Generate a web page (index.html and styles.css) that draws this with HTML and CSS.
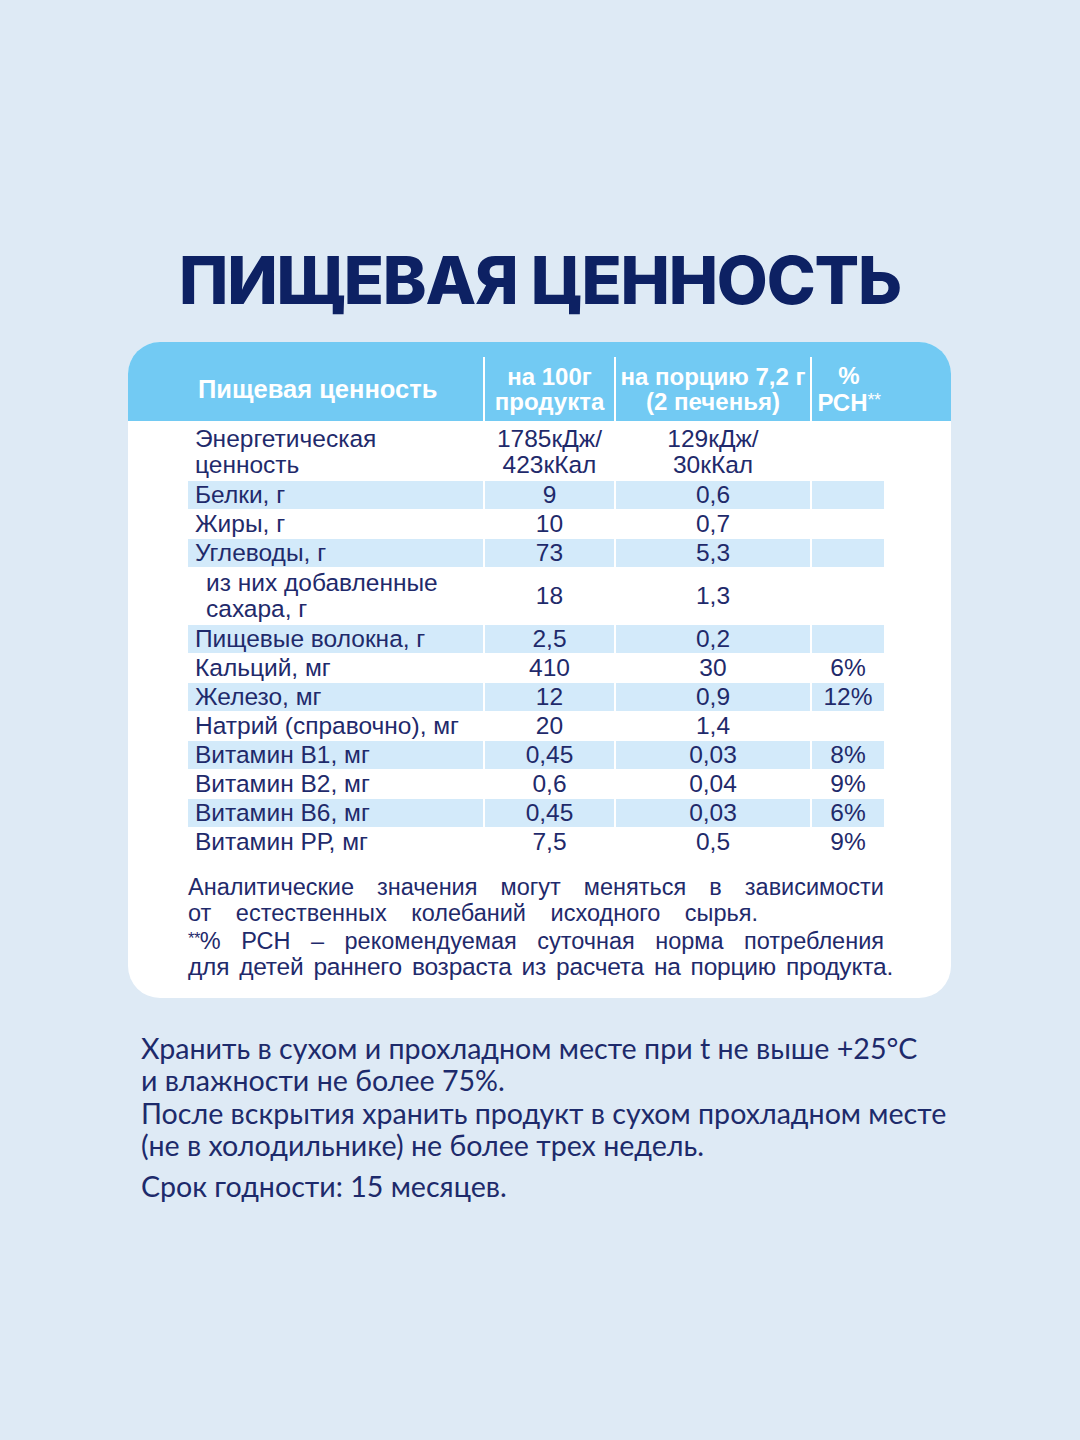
FILE: index.html
```html
<!DOCTYPE html>
<html lang="ru">
<head>
<meta charset="utf-8">
<title>Пищевая ценность</title>
<link rel="stylesheet" href="styles.css">
</head>
<body>
<main class="page">
  <h1 class="title">ПИЩЕВАЯ ЦЕННОСТЬ</h1>

  <section class="card">
    <div class="card-head">
      <div class="head-grid">
        <div class="hcell hname"><span>Пищевая ценность</span></div>
        <div class="hcell hnum"><span>на 100г<br>продукта</span></div>
        <div class="hcell hnum"><span>на порцию 7,2 г<br>(2 печенья)</span></div>
        <div class="hcell hnum hpct"><span>%<br>РСН<span class="stars">**</span></span></div>
      </div>
    </div>

    <div class="rows">
      <div class="row tall"><div class="c name"><span>Энергетическая<br>ценность</span></div><div class="c num"><span>1785кДж/<br>423кКал</span></div><div class="c num"><span>129кДж/<br>30кКал</span></div><div class="c num"></div></div>
      <div class="row alt"><div class="c name">Белки, г</div><div class="c num">9</div><div class="c num">0,6</div><div class="c num"></div></div>
      <div class="row"><div class="c name">Жиры, г</div><div class="c num">10</div><div class="c num">0,7</div><div class="c num"></div></div>
      <div class="row alt"><div class="c name">Углеводы, г</div><div class="c num">73</div><div class="c num">5,3</div><div class="c num"></div></div>
      <div class="row tall"><div class="c name sub"><span>из них добавленные<br>сахара, г</span></div><div class="c num">18</div><div class="c num">1,3</div><div class="c num"></div></div>
      <div class="row alt"><div class="c name">Пищевые волокна, г</div><div class="c num">2,5</div><div class="c num">0,2</div><div class="c num"></div></div>
      <div class="row"><div class="c name">Кальций, мг</div><div class="c num">410</div><div class="c num">30</div><div class="c num">6%</div></div>
      <div class="row alt"><div class="c name">Железо, мг</div><div class="c num">12</div><div class="c num">0,9</div><div class="c num">12%</div></div>
      <div class="row"><div class="c name">Натрий (справочно), мг</div><div class="c num">20</div><div class="c num">1,4</div><div class="c num"></div></div>
      <div class="row alt"><div class="c name">Витамин В1, мг</div><div class="c num">0,45</div><div class="c num">0,03</div><div class="c num">8%</div></div>
      <div class="row"><div class="c name">Витамин В2, мг</div><div class="c num">0,6</div><div class="c num">0,04</div><div class="c num">9%</div></div>
      <div class="row alt"><div class="c name">Витамин В6, мг</div><div class="c num">0,45</div><div class="c num">0,03</div><div class="c num">6%</div></div>
      <div class="row"><div class="c name">Витамин РР, мг</div><div class="c num">7,5</div><div class="c num">0,5</div><div class="c num">9%</div></div>
    </div>

    <div class="note">
      <span class="line full">Аналитические значения могут меняться в зависимости</span>
      <span class="line spaced">от естественных колебаний исходного сырья.</span>
      <span class="line full"><span class="stars">**</span>% РСН – рекомендуемая суточная норма потребления</span>
      <span class="line full tight">для детей раннего возраста из расчета на порцию продукта.</span>
    </div>
  </section>

  <section class="storage">
    <p>Хранить в сухом и прохладном месте при t не выше +25°С<br>и влажности не более 75%.<br>После вскрытия хранить продукт в сухом прохладном месте<br>(не в холодильнике) не более трех недель.</p>
    <p>Срок годности: 15 месяцев.</p>
  </section>
</main>
</body>
</html>
```

FILE: styles.css
```css
html, body {
  margin: 0;
  padding: 0;
}

body {
  background: #deeaf5;
  color: #1f2a6b;
  font-family: "Liberation Sans", Arial, sans-serif;
}

.page {
  width: 1080px;
  min-height: 1440px;
  padding-top: 247px;
  box-sizing: border-box;
}

.title {
  margin: 0;
  text-align: center;
  font-family: Inter, "Liberation Sans", sans-serif;
  font-weight: 800;
  font-size: 66px;
  line-height: 66px;
  color: #0d2163;
  letter-spacing: -1.2px;
}

.card {
  margin: 29px 129px 0 128px;
  background: #ffffff;
  border-radius: 32px;
  overflow: hidden;
  padding-bottom: 18px;
}

.card-head {
  background: #72caf3;
  height: 79px;
  padding: 15px 0 0 60px;
  box-sizing: border-box;
}

.head-grid {
  display: grid;
  grid-template-columns: 295px 129px 194px 72px;
  column-gap: 2px;
  width: 696px;
  height: 64px;
  background: #ffffff;
}

.hcell {
  background: #72caf3;
  color: #ffffff;
  font-weight: 700;
  font-size: 24px;
  line-height: 25px;
  display: flex;
  align-items: center;
  justify-content: center;
  text-align: center;
}

.hname {
  justify-content: flex-start;
  padding-left: 10px;
  font-size: 25.5px;
}

.hpct {
  justify-content: flex-start;
  padding-left: 2px;
}

.hpct > span {
  display: block;
  width: 72px;
  text-align: center;
  white-space: nowrap;
}

.stars {
  font-size: 0.75em;
  font-weight: 400;
  vertical-align: 0.25em;
  letter-spacing: -0.5px;
}

.rows {
  padding: 2px 0 0 60px;
  display: flex;
  flex-direction: column;
  gap: 1px;
}

.row {
  display: grid;
  grid-template-columns: 295px 129px 194px 72px;
  column-gap: 2px;
  width: 696px;
  height: 28px;
}

.row.tall {
  height: 56px;
}

.row:first-child.tall {
  height: 57px;
}

.c {
  font-size: 24.5px;
  line-height: 26px;
  display: flex;
  align-items: center;
  color: #1f2a6b;
}

.row.alt .c {
  background: #d3eafa;
}

.name {
  padding-left: 7px;
}

.name.sub {
  padding-left: 18px;
}

.num {
  justify-content: center;
  text-align: center;
}

.note {
  margin: 19px 0 0 60px;
  width: 696px;
  font-size: 23.5px;
  line-height: 25.5px;
  color: #1f2a6b;
}

.note .line {
  display: block;
  text-align: left;
  white-space: nowrap;
}

.note .line.spaced {
  word-spacing: 18px;
}

.note .line.full {
  text-align: justify;
  text-align-last: justify;
  white-space: normal;
}

.note .line.tight {
  font-size: 24.5px;
  letter-spacing: -0.2px;
  width: 705px;
}

.note .stars {
  font-size: 0.7em;
  vertical-align: 0.3em;
}

.storage {
  margin: 34px 0 0 141px;
  font-family: Lato, "Liberation Sans", sans-serif;
  font-size: 28.6px;
  line-height: 32.5px;
  color: #1d2a6b;
}

.storage p {
  margin: 0 0 8px 0;
}
```
